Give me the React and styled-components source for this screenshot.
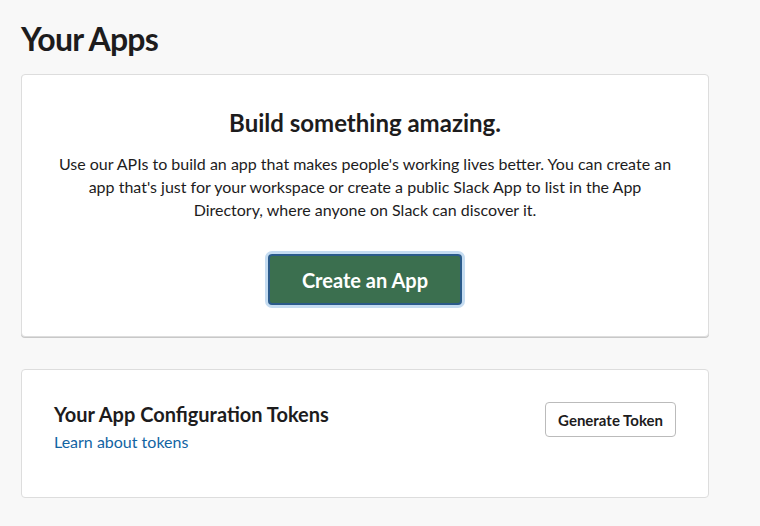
import React from "react";
import styled, { createGlobalStyle } from "styled-components";

const Global = createGlobalStyle`
  html, body {
    margin: 0;
    background: #f8f8f8;
    font-family: Lato, "Noto Sans", sans-serif;
    color: #1d1c1d;
  }
`;

const Page = styled.div`
  width: 688px;
  padding: 20px 0 28px 21px;
  display: flex;
  flex-direction: column;
`;

const Title = styled.h1`
  margin: 0 0 16px;
  font-size: 32px;
  line-height: 38px;
  font-weight: 700;
  letter-spacing: -0.8px;
`;

const Card = styled.section`
  background: #fff;
  border: 1px solid #dddddd;
  border-radius: 4px;
  box-shadow: ${(p) => (p.$raised ? "0 1px 0 #c8c8c8" : "none")};
  box-sizing: border-box;
`;

const Hero = styled(Card)`
  padding: 33px 30px 31px;
  display: flex;
  flex-direction: column;
  align-items: center;
  text-align: center;
  margin-bottom: 32px;
`;

const HeroTitle = styled.h2`
  margin: 0 0 14px;
  font-size: 24px;
  line-height: 30px;
  font-weight: 700;
`;

const HeroText = styled.p`
  margin: 0 0 33px;
  font-size: 16px;
  line-height: 23px;
`;

const PrimaryButton = styled.button`
  width: 194px;
  height: 51px;
  background: #3b6f4f;
  color: #fff;
  border: 2px solid #2b5b8a;
  border-radius: 4px;
  box-shadow: 0 0 0 3px #c5dcf1;
  font-family: inherit;
  font-size: 20px;
  font-weight: 700;
  cursor: pointer;
`;

const Tokens = styled(Card)`
  height: 129px;
  padding: 30px 32px 0;
  display: flex;
  justify-content: space-between;
  align-items: flex-start;
`;

const TokensText = styled.div`
  display: flex;
  flex-direction: column;
`;

const TokensTitle = styled.h3`
  margin: 0 0 3px;
  font-size: 20px;
  line-height: 28px;
  font-weight: 700;
`;

const Link = styled.a`
  font-size: 16px;
  line-height: 22px;
  color: #1264a3;
  text-decoration: none;
`;

const SecondaryButton = styled.button`
  height: 35px;
  margin-top: 2px;
  padding: 0 12px;
  background: #fff;
  color: #1d1c1d;
  border: 1px solid #bbbbbb;
  border-radius: 4px;
  font-family: inherit;
  font-size: 15px;
  font-weight: 700;
  cursor: pointer;
`;

export default function App() {
  return (
    <>
      <Global />
      <Page>
        <Title>Your Apps</Title>
        <Hero $raised>
          <HeroTitle>Build something amazing.</HeroTitle>
          <HeroText>
            Use our APIs to build an app that makes people's working lives better. You can create an
            app that's just for your workspace or create a public Slack App to list in the App
            Directory, where anyone on Slack can discover it.
          </HeroText>
          <PrimaryButton>Create an App</PrimaryButton>
        </Hero>
        <Tokens>
          <TokensText>
            <TokensTitle>Your App Configuration Tokens</TokensTitle>
            <Link href="#">Learn about tokens</Link>
          </TokensText>
          <SecondaryButton>Generate Token</SecondaryButton>
        </Tokens>
      </Page>
    </>
  );
}
